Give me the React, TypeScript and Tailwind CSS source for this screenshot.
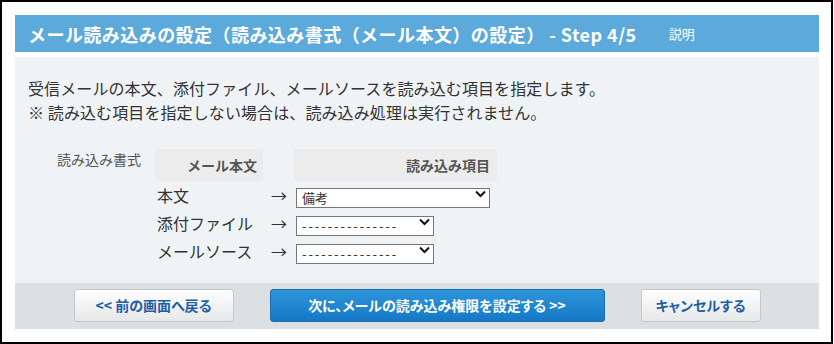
import { ChangeEvent, useState } from "react";

const jp = "font-['Noto_Sans_CJK_JP','Noto_Sans',sans-serif]";

interface Mapping {
  label: string;
  value: string;
  width: string;
}

const initialRows: Mapping[] = [
  { label: "本文", value: "備考", width: "w-[194px]" },
  { label: "添付ファイル", value: "", width: "w-[138px]" },
  { label: "メールソース", value: "", width: "w-[138px]" },
];

const fieldOptions = ["備考", "件名", "内容", "メモ"];

function Chevron() {
  return (
    <svg
      className="pointer-events-none absolute right-[4px] top-[6px]"
      width="11"
      height="8"
      viewBox="0 0 11 8"
      fill="none"
    >
      <polyline points="1,1.5 5.5,6 10,1.5" stroke="#111" strokeWidth="2" />
    </svg>
  );
}

function FieldSelect({
  value,
  width,
  onChange,
}: {
  value: string;
  width: string;
  onChange: (v: string) => void;
}) {
  // the empty option shows a row of dashes, spaced out like the original
  const spacing = value ? "" : "tracking-[1.9px]";
  return (
    <div className={`relative h-[20px] ${width}`}>
      <select
        value={value}
        onChange={(e: ChangeEvent<HTMLSelectElement>) => onChange(e.target.value)}
        className={`h-[20px] w-full appearance-none rounded-none border border-[#767676] bg-white pl-[5px] text-[13px] leading-[18px] text-[#333] outline-none ${spacing} ${jp}`}
      >
        <option value="">{"---------------"}</option>
        {fieldOptions.map((o) => (
          <option key={o} value={o}>
            {o}
          </option>
        ))}
      </select>
      <Chevron />
    </div>
  );
}

export default function App() {
  const [rows, setRows] = useState(initialRows);

  const updateRow = (i: number, v: string) => {
    setRows((prev) => prev.map((r, j) => (j === i ? { ...r, value: v } : r)));
  };

  return (
    <div className={`h-[344px] w-[834px] bg-white ${jp}`}>
      <div className="h-[344px] w-[833px] border-2 border-black pl-[13px] pt-[13px]">
        <div className="w-[804px]">
          {/* Header */}
          <div className="flex h-[37px] items-center bg-[#5caadb] pl-[13px] text-white">
            <h1 className="text-[18px] font-bold leading-none tracking-[0.45px]">
              メール読み込みの設定（読み込み書式（メール本文）の設定） - Step 4/5
            </h1>
            <span className="ml-[32px] text-[13px] leading-none">説明</span>
          </div>

          {/* Body */}
          <div className="mt-[5px] h-[226px] bg-[#eff3f6] pl-[13px] pt-[19px] text-[#333]">
            <p className="text-[16px] leading-[24px] tracking-[0.1px]">
              受信メールの本文、添付ファイル、メールソースを読み込む項目を指定します。
            </p>
            <p className="text-[16px] leading-[24px] tracking-[0.1px]">
              ※ 読み込む項目を指定しない場合は、読み込み処理は実行されません。
            </p>

            <div className="mt-[25px] flex">
              <div className="ml-[29px] w-[98px] text-[14px] leading-[20px] text-[#555]">
                読み込み書式
              </div>
              <div className="grid grid-cols-[108px_31px_203px]">
                <div className="flex h-[32px] items-center justify-end bg-[#ececec] pr-[6px] text-[14px] font-bold text-[#555]">
                  メール本文
                </div>
                <div />
                <div className="flex h-[32px] items-center justify-end bg-[#ececec] pr-[7px] text-[14px] font-bold text-[#555]">
                  読み込み項目
                </div>

                {rows.map((r, i) => (
                  <div key={r.label} className="contents">
                    <div className="flex h-[28px] items-center pl-[2px] text-[16px] leading-none text-[#333]">
                      {r.label}
                    </div>
                    <div className="flex h-[28px] items-center pl-[8px] text-[16px] leading-none text-[#333]">
                      →
                    </div>
                    <div className="h-[28px] pl-[2px] pt-[3px]">
                      <FieldSelect value={r.value} width={r.width} onChange={(v) => updateRow(i, v)} />
                    </div>
                  </div>
                ))}
              </div>
            </div>
          </div>

          {/* Footer buttons */}
          <div className="flex h-[46px] justify-center gap-[36px] bg-[#dce0e3] pt-[6px] text-[14px] font-bold [font-feature-settings:'palt']">
            <button className="h-[33px] w-[160px] rounded-[3px] border border-[#c3c8cc] bg-gradient-to-b from-white to-[#e6e7e8] text-[#1d5ea6]">
              &lt;&lt; 前の画面へ戻る
            </button>
            <button className="h-[33px] w-[335px] rounded-[3px] border border-[#1b6cb3] bg-gradient-to-b from-[#2d95da] to-[#1578c6] text-white">
              次に、メールの読み込み権限を設定する &gt;&gt;
            </button>
            <button className="h-[33px] w-[120px] rounded-[3px] border border-[#c3c8cc] bg-gradient-to-b from-white to-[#e6e7e8] text-[#1d5ea6]">
              キャンセルする
            </button>
          </div>
        </div>
      </div>
    </div>
  );
}
